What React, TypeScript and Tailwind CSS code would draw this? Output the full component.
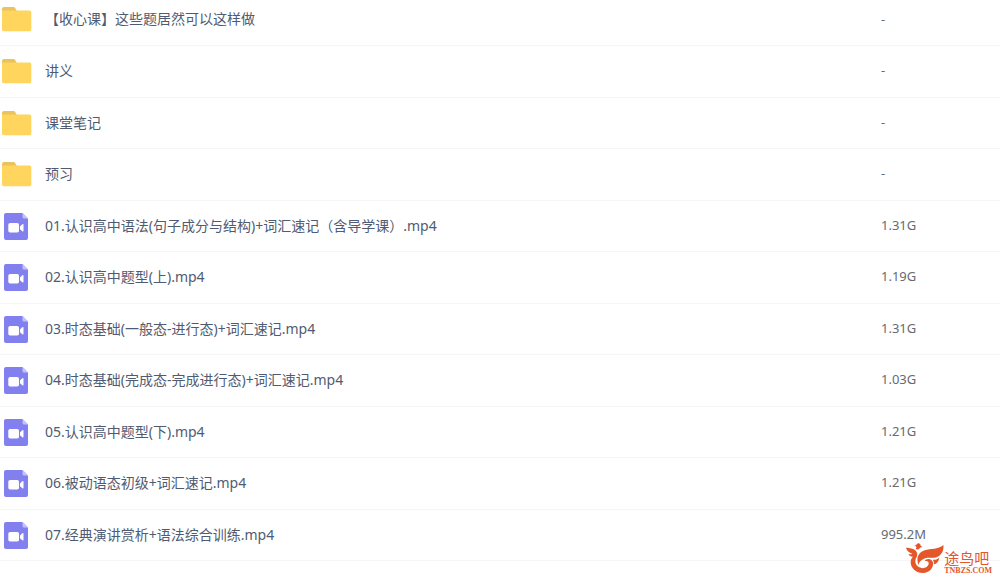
import type React from "react";

interface FileEntry {
  name: string;
  size: string;
  kind: "folder" | "video";
}

const files: FileEntry[] = [
  { name: "【收心课】这些题居然可以这样做", size: "-", kind: "folder" },
  { name: "讲义", size: "-", kind: "folder" },
  { name: "课堂笔记", size: "-", kind: "folder" },
  { name: "预习", size: "-", kind: "folder" },
  {
    name: "01.认识高中语法(句子成分与结构)+词汇速记（含导学课）.mp4",
    size: "1.31G",
    kind: "video",
  },
  { name: "02.认识高中题型(上).mp4", size: "1.19G", kind: "video" },
  {
    name: "03.时态基础(一般态-进行态)+词汇速记.mp4",
    size: "1.31G",
    kind: "video",
  },
  {
    name: "04.时态基础(完成态-完成进行态)+词汇速记.mp4",
    size: "1.03G",
    kind: "video",
  },
  { name: "05.认识高中题型(下).mp4", size: "1.21G", kind: "video" },
  { name: "06.被动语态初级+词汇速记.mp4", size: "1.21G", kind: "video" },
  { name: "07.经典演讲赏析+语法综合训练.mp4", size: "995.2M", kind: "video" },
];

const FolderIcon: React.FC = () => (
  <svg className="w-8 h-8 shrink-0" viewBox="0 0 32 32" aria-hidden="true">
    <path
      d="M2 6a2 2 0 0 1 2-2h9.500a2 2 0 0 1 1.700 1l1.300 2.500V12H2z"
      fill="#e9c35c"
    />
    <path
      d="M2 7.500h27.500a1.800 1.800 0 0 1 1.800 1.800V26.500a1.800 1.800 0 0 1-1.800 1.800H3.800A1.800 1.800 0 0 1 2 26.500z"
      fill="#ffd55e"
    />
  </svg>
);

const VideoIcon: React.FC = () => (
  <svg className="w-8 h-8 shrink-0" viewBox="0 0 32 32" aria-hidden="true">
    <path
      d="M6 3h16.500L28 8.500V28a2 2 0 0 1-2 2H6a2 2 0 0 1-2-2V5a2 2 0 0 1 2-2z"
      fill="#8280ef"
    />
    <path d="M22.500 3L28 8.500h-4a1.500 1.500 0 0 1-1.500-1.500z" fill="#c3c2fa" />
    <rect x="8.300" y="13" width="10.700" height="9.500" rx="1.800" fill="#fff" />
    <path
      d="M20 16.500l2.300-2.200q1.200-.8 1.200.5v6q0 1.300-1.200.5L20 19.200z"
      fill="#fff"
    />
  </svg>
);

const BirdLogo: React.FC = () => (
  <svg
    className="w-10 h-8 shrink-0"
    viewBox="0 0 120 96"
    fill="#e4572b"
    aria-hidden="true"
  >
    {/* Crest and head */}
    <path d="M30 6C35 8 37 5 40 2C45 -1 50 3 50 8L55 12L48 14C46 20 38 21 35 17C39 15 38 10 30 6z" />
    {/* Left feathers running down into the body */}
    <path d="M6 14C12 14 24 15 32 20C42 27 41 37 36 46C31 57 36 68 46 73C57 79 72 73 74 63C75 56 69 52 62 55C65 45 83 45 87 58C90 75 76 90 57 90C35 90 20 75 20 57C20 50 23 45 27 41C20 41 15 37 13 32C18 34 22 34 25 32C15 29 8 23 6 14z" />
    {/* Right wing */}
    <path d="M43 66C36 44 43 29 62 22C80 16 102 20 118 6C121 26 109 41 92 44C78 46 71 42 60 47C51 51 45 57 43 66z" />
    <path d="M86 50C95 51 101 48 106 44C104 56 97 63 90 64C90 58 89 53 86 50z" />
  </svg>
);

const FileRow: React.FC<{ file: FileEntry }> = ({ file }) => (
  <tr className="odd:h-[51px] even:h-[52px] border-b border-[#f5f6f8]">
    <td className="p-0 align-middle">
      <a href="#" className="flex items-center gap-[13px] text-[#505b71]">
        {file.kind === "folder" ? <FolderIcon /> : <VideoIcon />}
        <span className="text-sm">{file.name}</span>
      </a>
    </td>
    <td className="w-[12%] py-0 pr-0 pl-px align-middle text-[13px] text-[#666b72]">
      {file.size}
    </td>
  </tr>
);

export default function App() {
  return (
    <main className="relative min-h-screen overflow-hidden bg-white font-['Noto_Sans','Noto_Sans_CJK_SC',sans-serif]">
      <table className="-mt-1.5 w-full border-collapse">
        <tbody>
          {files.map((file) => (
            <FileRow key={file.name} file={file} />
          ))}
        </tbody>
      </table>

      {/* Site watermark */}
      <div className="absolute right-2 bottom-0.5 flex items-end text-[#e4572b]">
        <BirdLogo />
        <div className="flex flex-col">
          <span className="text-[15px] leading-4">途鸟吧</span>
          <span className="pt-px font-['Liberation_Serif',serif] text-[8px] leading-2 font-bold">
            TNBZS.COM
          </span>
        </div>
      </div>
    </main>
  );
}
